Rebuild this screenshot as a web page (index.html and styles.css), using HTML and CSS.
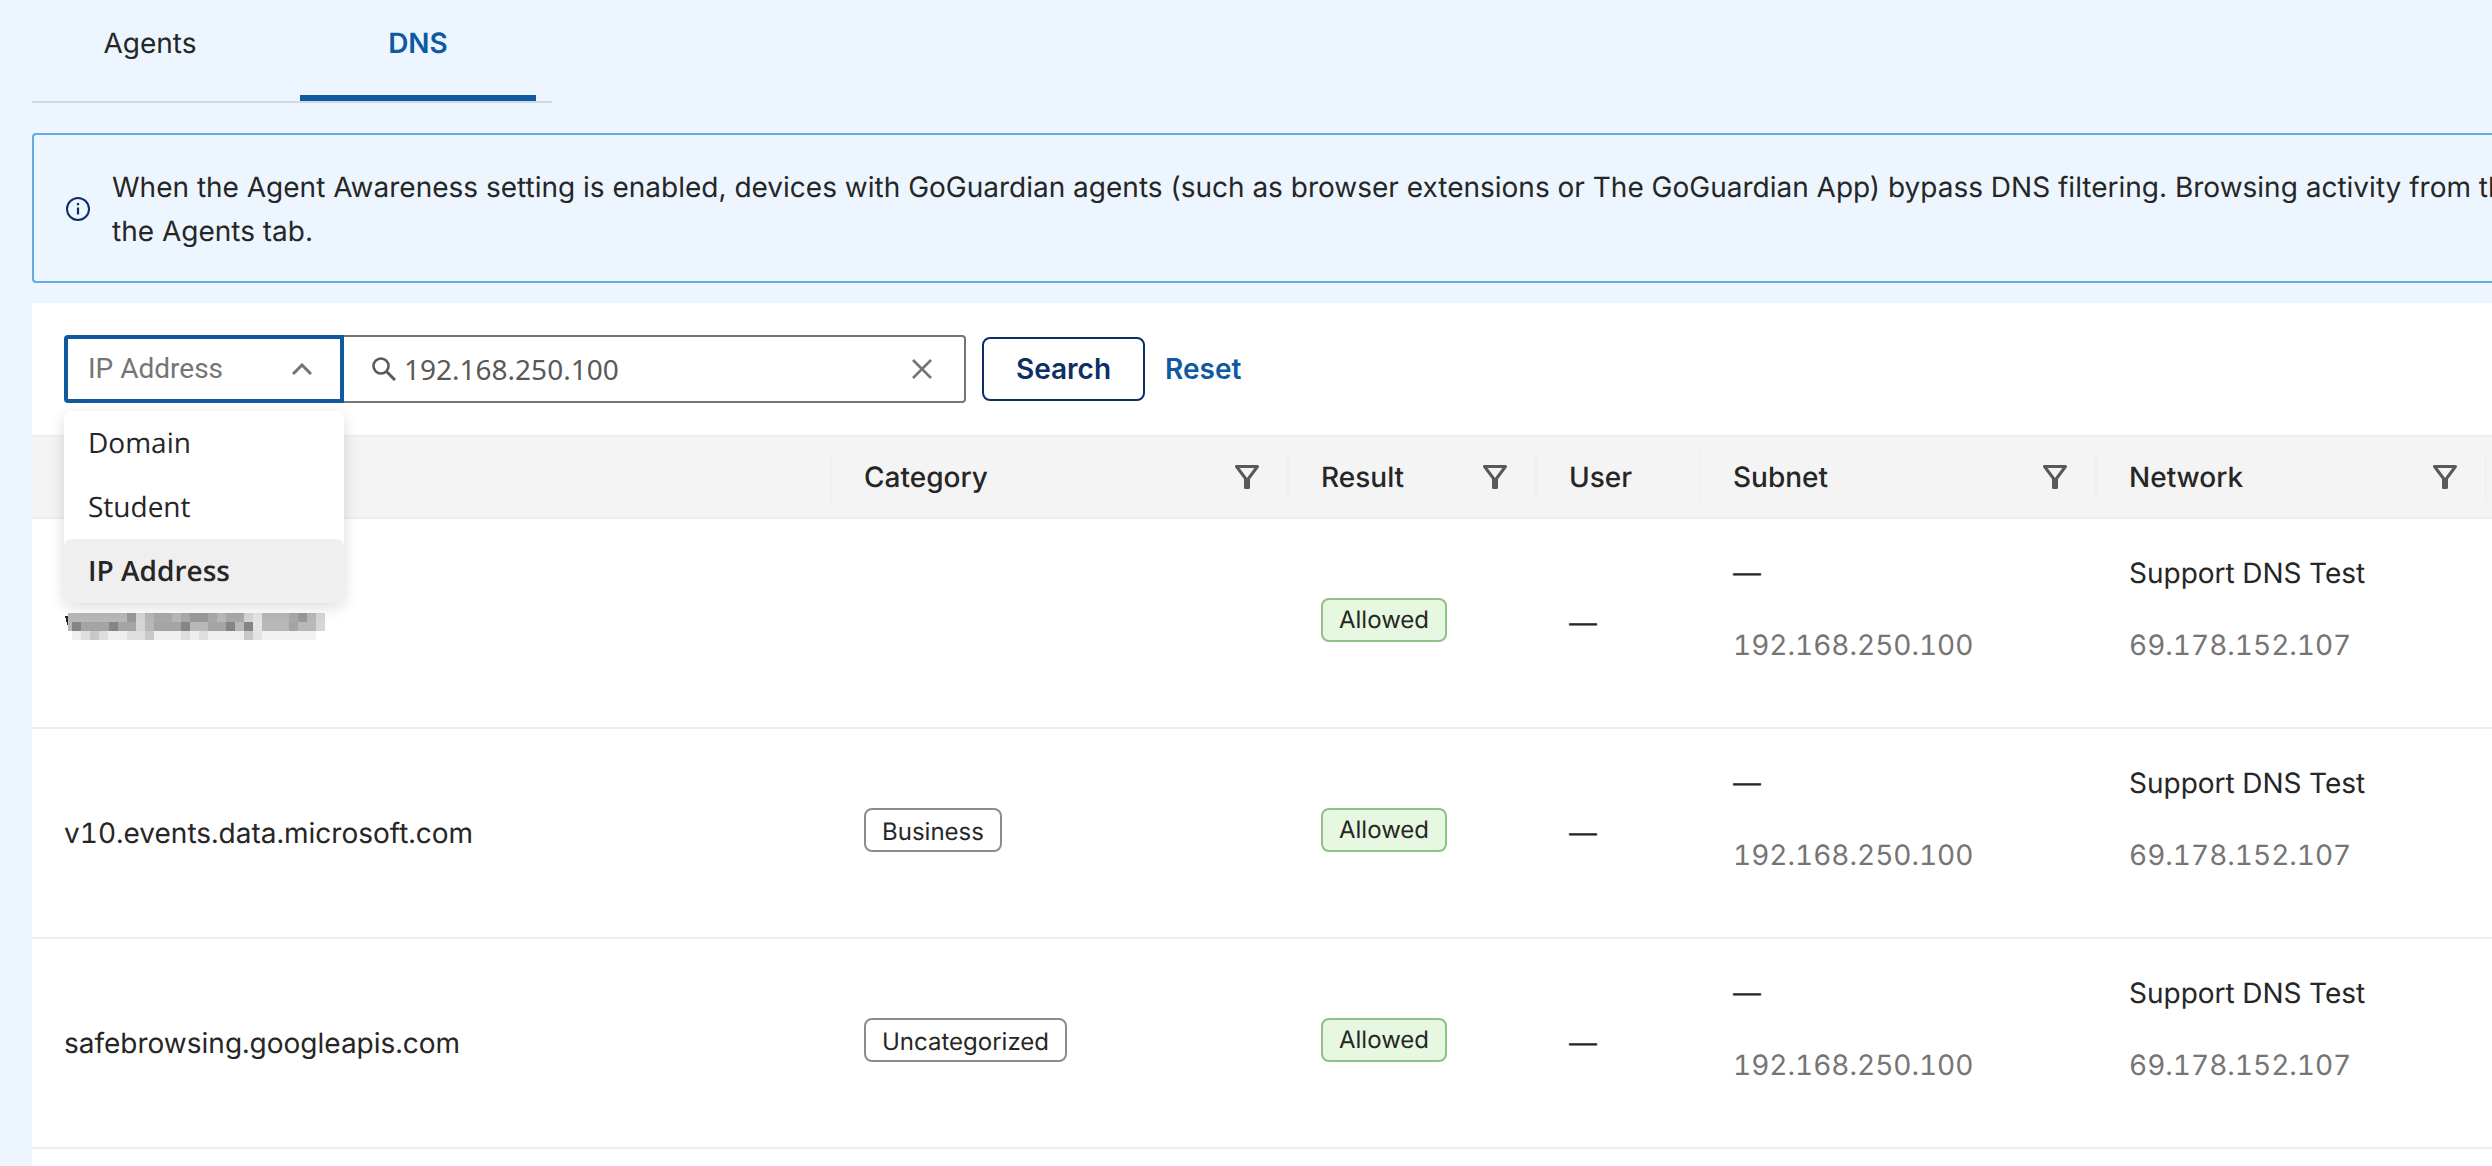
FILE: index.html
```html
<!DOCTYPE html>
<html lang="en">
  <head>
    <meta charset="UTF-8" />
    <meta name="viewport" content="width=device-width, initial-scale=1.0" />
    <title>DNS Activity</title>
    <link rel="stylesheet" href="styles.css">
  </head>
  <body>
    <!-- Shared icons -->
    <svg class="icon-defs" width="0" height="0" aria-hidden="true">
      <symbol id="icon-filter" viewBox="0 0 24 24">
        <path d="M1.500 1.500h21L13.500 13.500V22.500h-3V13.500z" fill="none" stroke="currentColor" stroke-width="3" stroke-linejoin="round" />
      </symbol>
    </svg>

    <!-- Tabs -->
    <nav class="tabs">
      <a class="tab" href="#">Agents</a>
      <a class="tab active" href="#">DNS</a>
    </nav>

    <!-- Info banner -->
    <div class="banner">
      <svg class="banner-icon" viewBox="0 0 24 24" aria-hidden="true">
        <circle cx="12" cy="12" r="11" fill="none" stroke="currentColor" stroke-width="2" />
        <path d="M12 10.500v7M12 6v2.200" stroke="currentColor" stroke-width="2.200" />
      </svg>
      <p>
        When the Agent Awareness setting is enabled, devices with GoGuardian agents (such as browser extensions or The GoGuardian App) bypass DNS filtering. Browsing activity from th<br />
        the Agents tab.
      </p>
    </div>

    <main class="panel">
      <!-- Search -->
      <form class="search-bar">
        <div class="search-type">
          <button type="button" class="type-button" aria-haspopup="listbox" aria-expanded="true">
            IP Address
            <svg class="chevron" viewBox="0 0 20 12" aria-hidden="true">
              <path d="M1 11L10 2l9 9" fill="none" stroke="currentColor" stroke-width="3" />
            </svg>
          </button>
          <ul class="type-menu" role="listbox" aria-label="Search by">
            <li role="option" aria-selected="false">Domain</li>
            <li role="option" aria-selected="false">Student</li>
            <li class="selected" role="option" aria-selected="true">IP Address</li>
          </ul>
        </div>
        <div class="search-field">
          <svg class="search-icon" viewBox="0 0 24 24" aria-hidden="true">
            <circle cx="9" cy="9" r="7.500" fill="none" stroke="currentColor" stroke-width="2.600" />
            <path d="M14.500 14.500l8.500 8.500" stroke="currentColor" stroke-width="3" />
          </svg>
          <input type="text" aria-label="Search value" value="192.168.250.100" />
          <button type="button" class="clear-button" aria-label="Clear">
            <svg viewBox="0 0 20 20" aria-hidden="true">
              <path d="M1 1l18 18M19 1L1 19" stroke="currentColor" stroke-width="2.600" />
            </svg>
          </button>
        </div>
        <button type="submit" class="search-button">Search</button>
        <button type="reset" class="reset-button">Reset</button>
      </form>

      <!-- Results -->
      <table>
        <colgroup>
          <col class="col-domain" />
          <col class="col-category" />
          <col class="col-result" />
          <col class="col-user" />
          <col class="col-subnet" />
          <col class="col-network" />
          <col />
        </colgroup>
        <thead>
          <tr>
            <th><div class="head"></div></th>
            <th><div class="head">Category <button aria-label="Filter category"><svg><use href="#icon-filter" /></svg></button></div></th>
            <th><div class="head">Result <button aria-label="Filter result"><svg><use href="#icon-filter" /></svg></button></div></th>
            <th><div class="head">User</div></th>
            <th><div class="head">Subnet <button aria-label="Filter subnet"><svg><use href="#icon-filter" /></svg></button></div></th>
            <th><div class="head">Network <button aria-label="Filter network"><svg><use href="#icon-filter" /></svg></button></div></th>
            <th></th>
          </tr>
        </thead>
        <tbody>
          <tr>
            <td>
              <!-- Domain hidden by a mosaic of 9px squares -->
              <svg class="redacted" viewBox="0 0 264 40" role="img" aria-label="Hidden domain" shape-rendering="crispEdges">
                <path d="M1 13h3v11z" fill="#262626" />
                <path d="M4 10h257v18H4z" fill="#b8b8b8" />
                <path d="M8 28h180v9H8z" fill="#efefef" />
                <path d="M197 28h55v9h-55z" fill="#f2f2f2" />
                <path d="M63 10h9v9h-9zM126 10h18v9h-18zM234 10h9v9h-9z" fill="#999" />
                <path d="M90 10h18v9H90zM117 10h9v9h-9zM144 10h9v9h-9zM162 10h18v9h-18zM225 10h9v9h-9z" fill="#a9a9a9" />
                <path d="M72 10h9v18h-9zM180 10h9v9h-9zM252 10h9v18h-9z" fill="#d5d5d5" />
                <path d="M189 10h9v27h-9z" fill="#e4e4e4" />
                <path d="M8 19h9v9H8zM45 19h9v9h-9zM117 19h9v9h-9zM162 19h9v9h-9zM180 19h9v9h-9z" fill="#858585" />
                <path d="M17 19h28v9H17zM54 19h18v9H54zM90 19h27v9H90zM144 19h18v9h-18zM225 19h9v9h-9z" fill="#a4a4a4" />
                <path d="M26 28h9v9h-9zM81 28h9v9h-9zM180 28h9v9h-9z" fill="#c8c8c8" />
                <path d="M17 28h9v9h-9zM35 28h9v9h-9zM63 28h18v9H63zM117 28h9v9h-9zM135 28h9v9h-9z" fill="#dedede" />
              </svg>
            </td>
            <td></td>
            <td><span class="tag allowed">Allowed</span></td>
            <td>—</td>
            <td><p>—</p><p class="address">192.168.250.100</p></td>
            <td><p>Support DNS Test</p><p class="address">69.178.152.107</p></td>
            <td></td>
          </tr>
          <tr>
            <td>v10.events.data.microsoft.com</td>
            <td><span class="tag category">Business</span></td>
            <td><span class="tag allowed">Allowed</span></td>
            <td>—</td>
            <td><p>—</p><p class="address">192.168.250.100</p></td>
            <td><p>Support DNS Test</p><p class="address">69.178.152.107</p></td>
            <td></td>
          </tr>
          <tr>
            <td>safebrowsing.googleapis.com</td>
            <td><span class="tag category">Uncategorized</span></td>
            <td><span class="tag allowed">Allowed</span></td>
            <td>—</td>
            <td><p>—</p><p class="address">192.168.250.100</p></td>
            <td><p>Support DNS Test</p><p class="address">69.178.152.107</p></td>
            <td></td>
          </tr>
        </tbody>
      </table>
    </main>
  </body>
</html>
```

FILE: styles.css
```css
* {
  box-sizing: border-box;
  margin: 0;
  padding: 0;
}

body {
  min-height: 100vh;
  padding-left: 32px;
  display: flex;
  flex-direction: column;
  background-color: #edf6ff;
  color: #262626;
  font-family: Inter, "Noto Sans", sans-serif;
  font-size: 28px;
  line-height: 44px;
  text-rendering: geometricPrecision;
}

button {
  background: none;
  border: none;
  color: inherit;
  font: inherit;
  cursor: pointer;
}

.icon-defs {
  position: absolute;
}

/* Tabs */
.tabs {
  display: flex;
  gap: 32px;
  align-self: flex-start;
  padding-right: 16px;
  border-bottom: 2px solid #d3d9e0;
}

.tab {
  width: 236px;
  height: 101px;
  padding-top: 21px;
  border-bottom: 6px solid transparent;
  color: #262626;
  text-align: center;
  text-decoration: none;
}

.tab.active {
  border-color: #0f5a9f;
  color: #0f5a9f;
  font-weight: 600;
}

/* Info banner */
.banner {
  display: flex;
  align-items: center;
  gap: 22px;
  margin: 30px 0 20px;
  padding: 30px 0 28px 32px;
  border: 2px solid #62aae0;
  border-right: none;
  border-radius: 4px 0 0 4px;
}

.banner p {
  flex: 1;
  overflow: hidden;
  white-space: nowrap;
}

.banner-icon {
  flex: none;
  width: 24px;
  height: 24px;
  color: #0d2f66;
}

/* Search */
.panel {
  flex: 1;
  background: #fff;
}

.search-bar {
  display: flex;
  align-items: center;
  padding: 32px;
}

.search-type {
  position: relative;
  width: 280px;
}

.type-button {
  display: flex;
  align-items: center;
  justify-content: space-between;
  width: 100%;
  height: 68px;
  padding: 0 28px 0 20px;
  border: 4px solid #0f5a9f;
  border-radius: 4px 0 0 4px;
  color: #757575;
  font-family: Roboto, sans-serif;
}

.chevron {
  width: 20px;
  height: 12px;
}

.type-menu {
  position: absolute;
  top: 76px;
  left: 0;
  width: 100%;
  background: #fff;
  border-radius: 8px;
  box-shadow: 0 4px 16px rgba(0, 0, 0, 0.14);
  font-family: "Open Sans", sans-serif;
  list-style: none;
}

.type-menu li {
  height: 64px;
  padding: 0 24px;
  line-height: 64px;
}

.type-menu .selected {
  background: #efefef;
  border-radius: 8px;
  font-weight: 600;
}

.search-field {
  display: flex;
  align-items: center;
  gap: 8px;
  width: 622px;
  height: 68px;
  margin-right: 16px;
  padding: 0 32px 0 28px;
  border: 2px solid #757575;
  border-left: none;
  border-radius: 0 4px 4px 0;
}

.search-icon {
  width: 24px;
  height: 24px;
  color: #595959;
}

.search-field input {
  flex: 1;
  min-width: 0;
  border: none;
  outline: none;
  color: #595959;
  font-family: "Noto Sans", sans-serif;
  font-size: 28px;
}

.clear-button {
  display: flex;
  color: #757575;
}

.clear-button svg {
  width: 20px;
  height: 20px;
}

.search-button {
  height: 64px;
  margin-right: 20px;
  padding: 0 32px;
  border: 2px solid #0d2f66;
  border-radius: 8px;
  color: #0d2f66;
  font-weight: 600;
}

.reset-button {
  color: #0f5a9f;
  font-weight: 600;
}

/* Results */
table {
  width: 100%;
  border-collapse: separate;
  border-spacing: 0;
  table-layout: fixed;
  font-variant-numeric: tabular-nums;
}

.col-domain {
  width: 800px;
}

.col-category {
  width: 457px;
}

.col-result {
  width: 248px;
}

.col-user {
  width: 164px;
}

.col-subnet {
  width: 396px;
}

.col-network {
  width: 390px;
}

th {
  height: 84px;
  background: #f4f4f4;
  border-top: 2px solid #eee;
  border-bottom: 2px solid #eee;
  font-weight: 500;
  text-align: left;
}

.head {
  display: flex;
  align-items: center;
  justify-content: space-between;
  height: 48px;
  padding: 0 28px 0 32px;
  border-right: 2px solid #efefef;
}

.head button {
  display: flex;
}

.head svg {
  width: 24px;
  height: 24px;
  color: #595959;
}

td {
  height: 210px;
  padding: 0 32px;
  border-bottom: 2px solid #eee;
  white-space: nowrap;
}

td p {
  margin-bottom: 28px;
}

.address {
  color: #757575;
}

.tag {
  display: inline-block;
  margin-bottom: 6px;
  padding: 0 16px;
  border: 2px solid #8c8c8c;
  border-radius: 8px;
  font-size: 24px;
  line-height: 40px;
  vertical-align: middle;
}

.category {
  padding-top: 4px;
  line-height: 36px;
}

.allowed {
  background: #e6f9e0;
  border-color: #8fc088;
}

.redacted {
  display: block;
  width: 264px;
  height: 40px;
}
```
